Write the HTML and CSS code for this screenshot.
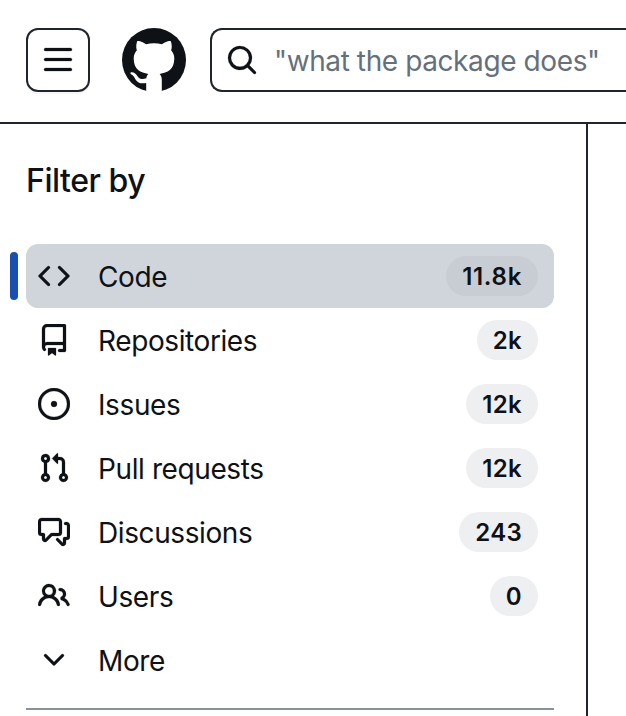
FILE: index.html
```html
<!DOCTYPE html>
<html lang="en">
<head>
<meta charset="utf-8">
<title>Code search</title>
<link rel="stylesheet" href="styles.css">
</head>
<body>
<header class="header">
  <button class="menu-button" aria-label="Open menu"><svg class="icon" viewBox="0 0 16 16"><path d="M1 2.75A.75.75 0 0 1 1.75 2h12.5a.75.75 0 0 1 0 1.5H1.75A.75.75 0 0 1 1 2.75Zm0 5A.75.75 0 0 1 1.75 7h12.5a.75.75 0 0 1 0 1.5H1.75A.75.75 0 0 1 1 7.75ZM1.75 12h12.5a.75.75 0 0 1 0 1.5H1.75a.75.75 0 0 1 0-1.5Z"/></svg></button>
  <svg class="logo" viewBox="0 0 64 64"><circle cx="32" cy="32" r="32"/><path class="logo-cat" d="M24.2 64.5V55C18.500 56.200 15 54.300 13.200 50.900C12.200 48.800 11.200 47.400 9.400 46.400C7.800 45.400 8 44.300 9.800 44.300C12.400 44.400 14.200 46.200 15.500 48.200C17.500 51.300 20.700 51.800 24.300 50.300C24.500 48.300 25.300 46.900 26.400 45.900C18.700 45 11.700 41.800 11.700 30.600C11.700 27.200 12.900 24.400 14.900 22.300C14.600 21.500 13.500 18.100 15.200 13.200C15.200 13.200 17.900 12.300 24 16.300C29.200 14.900 34.800 14.900 40 16.300C46.100 12.300 48.800 13.200 48.800 13.200C50.500 18.100 49.400 21.500 49.100 22.300C51.100 24.400 52.300 27.200 52.300 30.600C52.300 41.800 45.300 45 37.600 45.900C38.800 47 39.800 48.900 39.800 51.700V64.500Z"/></svg>
  <div class="search">
    <svg class="icon" viewBox="0 0 16 16"><path d="M10.68 11.74a6 6 0 0 1-7.922-8.982 6 6 0 0 1 8.982 7.922l3.04 3.04a.749.749 0 0 1-.326 1.275.749.749 0 0 1-.734-.215ZM11.5 7a4.499 4.499 0 1 0-8.997 0A4.499 4.499 0 0 0 11.5 7Z"/></svg>
    <span class="query">"what the package does"</span>
  </div>
</header>
<div class="sidebar">
  <h2 class="title">Filter by</h2>
  <nav class="filters">
    <a class="item selected"><svg class="icon" viewBox="0 0 16 16"><path d="m11.28 3.22 4.25 4.25a.75.75 0 0 1 0 1.06l-4.25 4.25a.749.749 0 0 1-1.275-.326.749.749 0 0 1 .215-.734L13.94 8l-3.72-3.72a.749.749 0 0 1 .326-1.275.749.749 0 0 1 .734.215Zm-6.56 0a.751.751 0 0 1 1.042.018.751.751 0 0 1 .018 1.042L2.06 8l3.72 3.72a.749.749 0 0 1-.326 1.275.749.749 0 0 1-.734-.215L.47 8.53a.75.75 0 0 1 0-1.06Z"/></svg><span class="label">Code</span><span class="count">11.8k</span></a>
    <a class="item"><svg class="icon" viewBox="0 0 16 16"><path d="M2 2.5A2.5 2.5 0 0 1 4.5 0h8.75a.75.75 0 0 1 .75.75v12.5a.75.75 0 0 1-.75.75h-2.5a.75.75 0 0 1 0-1.5h1.75v-2h-8a1 1 0 0 0-.714 1.7.75.75 0 1 1-1.072 1.05A2.495 2.495 0 0 1 2 11.5Zm10.5-1h-8a1 1 0 0 0-1 1v6.708A2.486 2.486 0 0 1 4.5 9h8ZM5 12.25a.25.25 0 0 1 .25-.25h3.5a.25.25 0 0 1 .25.25v3.25a.25.25 0 0 1-.4.2l-1.45-1.087a.249.249 0 0 0-.3 0L5.4 15.7a.25.25 0 0 1-.4-.2Z"/></svg><span class="label">Repositories</span><span class="count">2k</span></a>
    <a class="item"><svg class="icon" viewBox="0 0 16 16"><path d="M8 9.5a1.5 1.5 0 1 0 0-3 1.5 1.5 0 0 0 0 3Z"/><path d="M8 0a8 8 0 1 1 0 16A8 8 0 0 1 8 0ZM1.5 8a6.5 6.5 0 1 0 13 0 6.5 6.5 0 0 0-13 0Z"/></svg><span class="label">Issues</span><span class="count">12k</span></a>
    <a class="item"><svg class="icon" viewBox="0 0 16 16"><path d="M1.5 3.25a2.25 2.25 0 1 1 3 2.122v5.256a2.251 2.251 0 1 1-1.5 0V5.372A2.25 2.25 0 0 1 1.5 3.25Zm5.677-.177L9.573.677A.25.25 0 0 1 10 .854V2.5h1A2.5 2.5 0 0 1 13.5 5v5.628a2.251 2.251 0 1 1-1.5 0V5a1 1 0 0 0-1-1h-1v1.646a.25.25 0 0 1-.427.177L7.177 3.427a.25.25 0 0 1 0-.354ZM3.75 2.5a.75.75 0 1 0 0 1.5.75.75 0 0 0 0-1.5Zm0 9.5a.75.75 0 1 0 0 1.5.75.75 0 0 0 0-1.5Zm8.25.75a.75.75 0 1 0 1.5 0 .75.75 0 0 0-1.5 0Z"/></svg><span class="label">Pull requests</span><span class="count">12k</span></a>
    <a class="item"><svg class="icon" viewBox="0 0 16 16"><path d="M1.75 1h8.5c.966 0 1.75.784 1.75 1.75v5.5A1.75 1.75 0 0 1 10.25 10H7.061l-2.574 2.573A1.458 1.458 0 0 1 2 11.543V10h-.25A1.75 1.75 0 0 1 0 8.25v-5.5C0 1.784.784 1 1.75 1ZM1.5 2.75v5.5c0 .138.112.25.25.25h1a.75.75 0 0 1 .75.75v2.19l2.72-2.72a.749.749 0 0 1 .53-.22h3.5a.25.25 0 0 0 .25-.25v-5.5a.25.25 0 0 0-.25-.25h-8.5a.25.25 0 0 0-.25.25Zm13 2a.25.25 0 0 0-.25-.25h-.5a.75.75 0 0 1 0-1.5h.5c.966 0 1.75.784 1.75 1.75v5.5A1.75 1.75 0 0 1 14.25 12H14v1.543a1.458 1.458 0 0 1-2.487 1.03L9.22 12.28a.749.749 0 0 1 .326-1.275.749.749 0 0 1 .734.215l2.22 2.22v-2.19a.75.75 0 0 1 .75-.75h1a.25.25 0 0 0 .25-.25Z"/></svg><span class="label">Discussions</span><span class="count">243</span></a>
    <a class="item"><svg class="icon" viewBox="0 0 16 16"><path d="M2 5.5a3.5 3.5 0 1 1 5.898 2.549 5.508 5.508 0 0 1 3.034 4.084.75.75 0 1 1-1.482.235 4 4 0 0 0-7.9 0 .75.75 0 0 1-1.482-.236A5.507 5.507 0 0 1 3.102 8.05 3.493 3.493 0 0 1 2 5.5ZM11 4a3.001 3.001 0 0 1 2.22 5.018 5.01 5.01 0 0 1 2.56 3.012.749.749 0 0 1-.885.954.752.752 0 0 1-.549-.514 3.507 3.507 0 0 0-2.522-2.372.75.75 0 0 1-.574-.73v-.352a.75.75 0 0 1 .416-.672A1.5 1.5 0 0 0 11 5.5.75.75 0 0 1 11 4Zm-5.5-.5a2 2 0 1 0-.001 3.999A2 2 0 0 0 5.5 3.5Z"/></svg><span class="label">Users</span><span class="count">0</span></a>
    <a class="item"><svg class="icon" viewBox="0 0 16 16"><path d="M12.78 5.22a.749.749 0 0 1 0 1.06l-4.25 4.25a.749.749 0 0 1-1.06 0L3.22 6.28a.749.749 0 1 1 1.06-1.06L8 8.939l3.72-3.719a.749.749 0 0 1 1.06 0Z"/></svg><span class="label">More</span></a>
  </nav>
  <div class="divider"></div>
</div>
</body>
</html>
```
FILE: styles.css
```css
* { box-sizing: border-box; }
body {
  margin: 0;
  height: 716px;
  overflow: hidden;
  display: flex;
  flex-direction: column;
  background: #fff;
  color: #0e1116;
  font-family: Inter, "Liberation Sans", sans-serif;
  font-size: 28px;
}
svg { display: block; flex: none; fill: currentColor; }
.icon { width: 32px; height: 32px; stroke: currentColor; stroke-width: .12; }
.header {
  display: flex;
  flex: none;
  height: 124px;
  padding: 28px 0 0 26px;
  border-bottom: 2px solid #20252c;
}
.menu-button {
  display: grid;
  place-items: center;
  flex: none;
  width: 64px;
  height: 64px;
  padding: 0;
  border: 2px solid #20252c;
  border-radius: 12px;
  background: #fff;
  color: inherit;
  box-shadow: 0 2px 0 rgba(31, 35, 40, .04);
}
.logo { width: 64px; height: 64px; margin: 0 24px 0 32px; }
.logo-cat { fill: #fff; }
.search {
  display: flex;
  align-items: center;
  flex: 1;
  gap: 16px;
  height: 64px;
  padding-left: 14px;
  border: 2px solid #20252c;
  border-right: 0;
  border-radius: 12px 0 0 12px;
}
.query { padding-top: 1px; color: #66707b; white-space: nowrap; letter-spacing: -.4px; }
.sidebar {
  flex: 1;
  width: 588px;
  padding: 33px 32px 0 26px;
  border-right: 2px solid #20252c;
}
.title {
  margin: 0 0 39px;
  font-size: 32px;
  line-height: 48px;
  font-weight: 550;
  letter-spacing: -.45px;
}
.item {
  position: relative;
  display: flex;
  align-items: center;
  height: 64px;
  padding: 0 16px 0 12px;
  border-radius: 12px;
}
.selected { background: #d0d5dc; }
.selected::before {
  content: "";
  position: absolute;
  left: -16px;
  top: 8px;
  width: 8px;
  height: 48px;
  border-radius: 6px;
  background: #194fb1;
}
.label { flex: 1; margin-left: 28px; padding-top: 2px; letter-spacing: -.4px; }
.count {
  height: 40px;
  padding: 2px 16px 0;
  border-radius: 20px;
  background: #eeeff1;
  font-size: 24px;
  line-height: 38px;
  font-weight: 600;
  letter-spacing: .3px;
}
.selected .count { letter-spacing: .7px; }
.selected .count { background: #c8cdd3; }
.divider { height: 2px; margin-top: 16px; background: #88929d; }
```
